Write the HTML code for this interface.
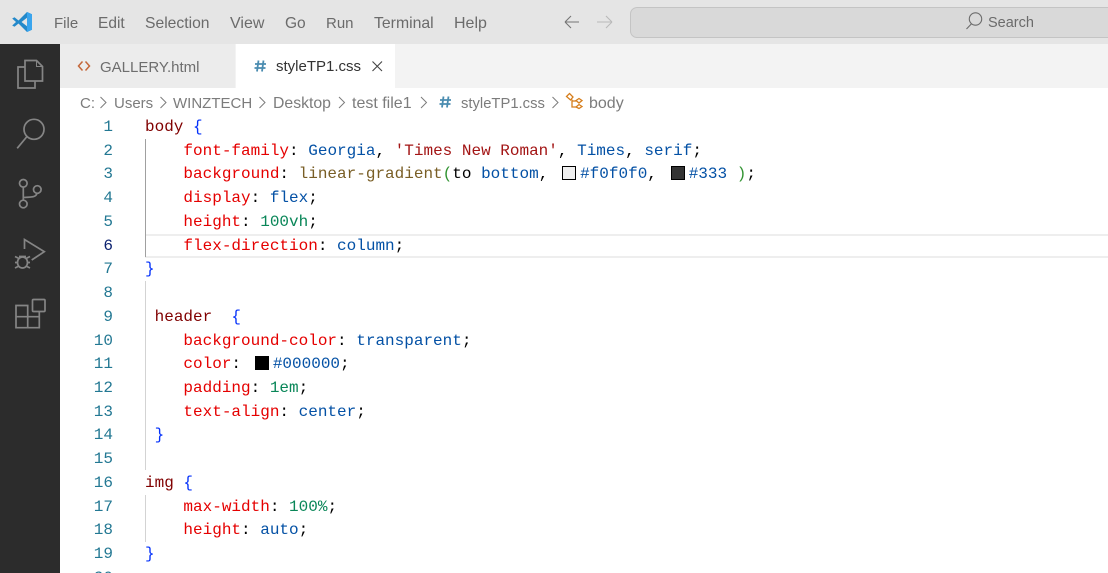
<!DOCTYPE html>
<html><head><meta charset="utf-8"><style>
html,body{margin:0;padding:0;width:1108px;height:573px;overflow:hidden;background:#fff}
body{position:relative;font-family:"Liberation Sans",sans-serif}
.a{position:absolute;white-space:pre}
.m{color:#6b6b6b;top:15px;line-height:18px}
.bc{color:#7c7c7c;top:95px;line-height:18px}
.ln{position:absolute;width:53px;left:60px;text-align:right;font:16px/24px "Liberation Mono",monospace;color:#237893}
.c{position:absolute;left:145px;font:16px/24px "Liberation Mono",monospace;white-space:pre;color:#000}
.p{color:#e50000}.s{color:#800000}.v{color:#0451a5}.n{color:#098658}.q{color:#a31515}.b{color:#0431fa}.f{color:#795e26}.g{color:#319331}
.sw{display:inline-block;box-sizing:border-box;width:14px;height:14px;border:1px solid #000;vertical-align:-2px;margin:0 3.800px 0 4.400px}
.gd{position:absolute;left:145px;width:1px;background:#d3d3d3}
</style></head><body>
<div class="a" style="left:0;top:0;width:1108px;height:44px;background:#e5e5e5"></div>
<div class="a" style="left:60px;top:44px;width:1048px;height:44px;background:#f3f3f3"></div>
<div class="a" style="left:0;top:44px;width:60px;height:529px;background:#2c2c2c"></div>
<div class="a" style="left:60px;top:44px;width:175px;height:44px;background:#ececec"></div>
<div class="a" style="left:236px;top:44px;width:159px;height:44px;background:#fff"></div>

<svg class="a" style="left:11px;top:11px" width="22" height="22" viewBox="0 0 22 22"><path d="M16 1 L7.500 9.500 L3.500 6.300 L1.200 7.500 L5 11 L1.200 14.500 L3.500 15.700 L7.500 12.500 L16 21 L21 18.800 V3.200 Z M16 6.800 V15.200 L10.500 11 Z" fill="#2489ca" fill-rule="evenodd"/><path d="M16 1 L21 3.200 V18.800 L16 21 V15.200 V6.800Z" fill="#3aa5ee"/></svg>

<div class="a m" style="left:54px;font-size:15px">File</div>
<div class="a m" style="left:98px;font-size:15.500px">Edit</div>
<div class="a m" style="left:145px;font-size:15.700px">Selection</div>
<div class="a m" style="left:230px;font-size:16px">View</div>
<div class="a m" style="left:285px;font-size:15.500px">Go</div>
<div class="a m" style="left:326px;font-size:15px">Run</div>
<div class="a m" style="left:374px;font-size:15.800px">Terminal</div>
<div class="a m" style="left:454px;font-size:16px">Help</div>

<svg class="a" style="left:560px;top:11px" width="60" height="22" viewBox="0 0 60 22" fill="none"><path d="M5 11H19M5 11L11 5M5 11L11 17" stroke="#757575" stroke-width="1.100"/><path d="M37 11H52M52 11L46 5M52 11L46 17" stroke="#b9b9b9" stroke-width="1.100"/></svg>
<div class="a" style="left:630px;top:7px;width:490px;height:29px;background:#d9d9d9;border:1px solid #c4c4c4;border-radius:7px"></div>
<svg class="a" style="left:964px;top:11px" width="20" height="20" viewBox="0 0 20 20" fill="none" stroke="#6b6b6b" stroke-width="1.100"><circle cx="11.500" cy="8" r="6.200"/><path d="M7.500 12.800L2.500 18"/></svg>
<div class="a" style="left:988px;top:13.500px;font-size:14.500px;line-height:18px;color:#6b6b6b">Search</div>

<svg class="a" style="left:76px;top:58px" width="16" height="16" viewBox="0 0 16 16" fill="none" stroke="#c4673a" stroke-width="1.500"><path d="M6.500 3.500L2.500 8L6.500 12.500M9.500 3.500L13.500 8L9.500 12.500"/></svg>
<div class="a" style="left:100px;top:58.500px;font-size:15px;line-height:18px;color:#6e6e6e">GALLERY.html</div>
<svg class="a" style="left:254px;top:60px" width="13" height="12" viewBox="0 0 13 12" fill="none" stroke="#4a8cb0" stroke-width="1.800"><path d="M4.500 0.500L3 11.500M9.500 0.500L8 11.500M1 4H12M0.500 8H11.500"/></svg>
<div class="a" style="left:276px;top:58px;font-size:15px;line-height:18px;color:#333">styleTP1.css</div>
<svg class="a" style="left:370px;top:59px" width="14" height="14" viewBox="0 0 14 14" fill="none" stroke="#444" stroke-width="1.100"><path d="M2.500 2.500L12 12M12 2.500L2.500 12"/></svg>

<div class="a bc" style="left:80px;font-size:15px">C:</div>
<div class="a bc" style="left:114px;font-size:15px">Users</div>
<div class="a bc" style="left:173px;font-size:15px">WINZTECH</div>
<div class="a bc" style="left:273px;font-size:15.800px">Desktop</div>
<div class="a bc" style="left:352px;font-size:16px">test file1</div>
<svg class="a" style="left:439px;top:96px" width="13" height="12" viewBox="0 0 13 12" fill="none" stroke="#4a8cb0" stroke-width="1.800"><path d="M4.500 0.500L3 11.500M9.500 0.500L8 11.500M1 4H12M0.500 8H11.500"/></svg>
<div class="a bc" style="left:461px;font-size:14.800px">styleTP1.css</div>
<div class="a bc" style="left:589px;font-size:16px">body</div>
<svg class="a" style="left:0;top:0" width="600" height="120" viewBox="0 0 600 120" fill="none" stroke="#7c7c7c" stroke-width="1"><path d="M100.500 97L106 102.500L100.500 108M160.500 97L166 102.500L160.500 108M259.500 97L265 102.500L259.500 108M339 97L344.500 102.500L339 108M421 97L426.500 102.500L421 108M552.500 97L558 102.500L552.500 108"/></svg>
<svg class="a" style="left:564px;top:92px" width="20" height="18" viewBox="564 92 20 18" fill="none" stroke="#d67e1c" stroke-width="1.300"><path d="M569.500 93.500L573 97L570.500 100L566.500 96.500Z"/><path d="M572 99.500V107H576"/><path d="M572 101H576"/><path d="M576 100.500L579 98.500L582 100.500L579 103L576 100.500Z"/><path d="M576 107L579 104.500L582 106.500L579 108.500L576 107Z"/></svg>

<svg class="a" style="left:0;top:44px" width="60" height="300" viewBox="0 44 60 300" fill="none" stroke="#858585" stroke-width="1.700">
<path d="M24.500 67H18V88H35V81"/><path d="M25 60.500H36.500L42.500 66.500V81H25Z"/><path d="M36.500 60.500V66.500H42.500" stroke-width="1"/>
<circle cx="34" cy="129.300" r="10"/><path d="M27 136.500L17.200 148.300"/>
<circle cx="23.300" cy="183.300" r="3.800"/><circle cx="37.300" cy="189.500" r="3.800"/><circle cx="23.300" cy="204" r="3.800"/><path d="M23.300 187V200.200M37 193.300C36 197 33 197 23.300 197.500"/>
<path d="M24.500 249V239.500L44.300 251.700L31.700 260"/>
<ellipse cx="22.500" cy="262.500" rx="5" ry="5.500"/><path d="M15 256.500L19 258.500M30 256.500L26 258.500M15 262.500H18M30 262.500H27M15 268L19 266M30 268L26 266M19 256.500H26"/>
<path d="M16 305.500H27.700V327.700H16ZM16 316.700H39.300V327.700H27.700M39.300 316.700V311"/><rect x="32.500" y="299.500" width="12.500" height="12" rx="1"/>
</svg>

<div class="a" style="left:145px;top:234px;width:963px;height:20px;border-top:2px solid #eee;border-bottom:2px solid #eee"></div>
<div class="gd" style="top:139px;height:118px;background:#a0a0a0"></div>
<div class="gd" style="top:281px;height:189px"></div>
<div class="gd" style="top:495px;height:47px"></div>

<div class="ln" style="top:115px">1</div><div class="c" style="top:115px"><span class="s">body</span> <span class="b">{</span></div>
<div class="ln" style="top:138.700px">2</div><div class="c" style="top:138.700px">    <span class="p">font-family</span>: <span class="v">Georgia</span>, <span class="q">'Times New Roman'</span>, <span class="v">Times</span>, <span class="v">serif</span>;</div>
<div class="ln" style="top:162.400px">3</div><div class="c" style="top:162.400px">    <span class="p">background</span>: <span class="f">linear-gradient</span><span class="g">(</span>to <span class="v">bottom</span>, <i class="sw" style="background:#f0f0f0"></i><span class="v">#f0f0f0</span>, <i class="sw" style="background:#333"></i><span class="v">#333</span> <span class="g">)</span>;</div>
<div class="ln" style="top:186.200px">4</div><div class="c" style="top:186.200px">    <span class="p">display</span>: <span class="v">flex</span>;</div>
<div class="ln" style="top:209.900px">5</div><div class="c" style="top:209.900px">    <span class="p">height</span>: <span class="n">100vh</span>;</div>
<div class="ln" style="top:233.600px;color:#0b216f">6</div><div class="c" style="top:233.600px">    <span class="p">flex-direction</span>: <span class="v">column</span>;</div>
<div class="ln" style="top:257.300px">7</div><div class="c" style="top:257.300px"><span class="b">}</span></div>
<div class="ln" style="top:281px">8</div>
<div class="ln" style="top:304.800px">9</div><div class="c" style="top:304.800px"> <span class="s">header</span>  <span class="b">{</span></div>
<div class="ln" style="top:328.500px">10</div><div class="c" style="top:328.500px">    <span class="p">background-color</span>: <span class="v">transparent</span>;</div>
<div class="ln" style="top:352.200px">11</div><div class="c" style="top:352.200px">    <span class="p">color</span>: <i class="sw" style="background:#000"></i><span class="v">#000000</span>;</div>
<div class="ln" style="top:375.900px">12</div><div class="c" style="top:375.900px">    <span class="p">padding</span>: <span class="n">1em</span>;</div>
<div class="ln" style="top:399.600px">13</div><div class="c" style="top:399.600px">    <span class="p">text-align</span>: <span class="v">center</span>;</div>
<div class="ln" style="top:423.400px">14</div><div class="c" style="top:423.400px"> <span class="b">}</span></div>
<div class="ln" style="top:447.100px">15</div>
<div class="ln" style="top:470.800px">16</div><div class="c" style="top:470.800px"><span class="s">img</span> <span class="b">{</span></div>
<div class="ln" style="top:494.500px">17</div><div class="c" style="top:494.500px">    <span class="p">max-width</span>: <span class="n">100%</span>;</div>
<div class="ln" style="top:518.200px">18</div><div class="c" style="top:518.200px">    <span class="p">height</span>: <span class="v">auto</span>;</div>
<div class="ln" style="top:542px">19</div><div class="c" style="top:542px"><span class="b">}</span></div>
<div class="ln" style="top:565.700px">20</div>
</body></html>
